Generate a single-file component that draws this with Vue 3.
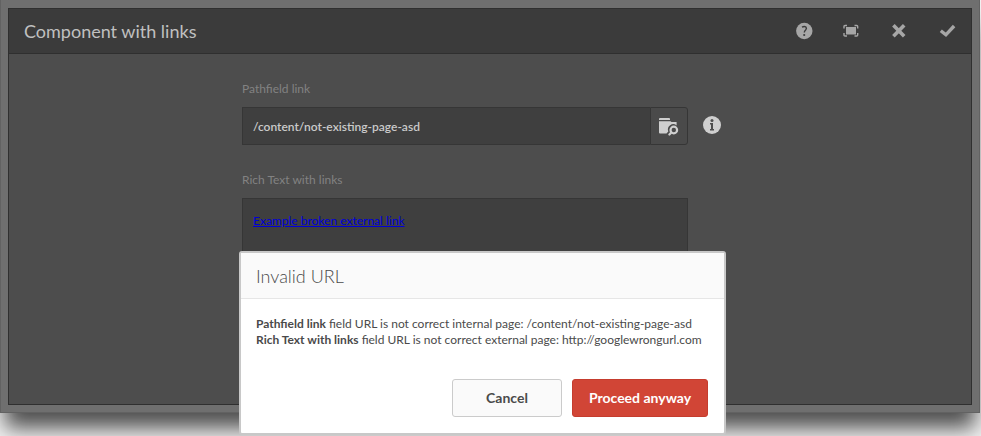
<script setup>
import { ref } from 'vue'

const path = ref('/content/not-existing-page-asd')
const problems = [
  { field: 'Pathfield link', kind: 'internal', url: '/content/not-existing-page-asd' },
  { field: 'Rich Text with links', kind: 'external', url: 'http://googlewrongurl.com' },
]
</script>

<template>
  <div class="page">
    <div class="frame">
      <section class="dialog">
        <header class="dialog-header">
          <h1>Component with links</h1>
          <div class="actions">
            <button type="button" aria-label="Help">
              <svg width="18" height="18" viewBox="0 0 18 18">
                <circle cx="9.3" cy="9" r="8.2" fill="currentColor" />
                <path d="M7 5.2Q9.2 4 10.9 5Q12.1 6.500 10.600 8Q9.300 9.100 9.300 10.600" fill="none" stroke="#3b3b3b" stroke-width="1.4" />
                <circle cx="9.2" cy="13" r="1.1" fill="#3b3b3b" />
              </svg>
            </button>
            <button type="button" aria-label="Toggle fullscreen">
              <svg width="18" height="18" viewBox="0 0 18 18">
                <rect x="3" y="5" width="10" height="7.500" fill="currentColor" />
                <path d="M1 6.500V4.500Q1 3.500 2 3.500H4M11.500 3.500H13.700Q14.700 3.500 14.700 4.500V6.500M14.700 11V13Q14.700 14 13.700 14H11.500M4 14H2Q1 14 1 13V11" fill="none" stroke="currentColor" stroke-width="1.4" />
              </svg>
            </button>
            <button type="button" aria-label="Close">
              <svg width="18" height="18" viewBox="0 0 18 18">
                <path d="M2.400 3.200L13.200 14.200M13.200 3.200L2.400 14.200" fill="none" stroke="currentColor" stroke-width="3.6" />
              </svg>
            </button>
            <button type="button" aria-label="Done">
              <svg width="18" height="18" viewBox="0 0 18 18">
                <path d="M1.800 8.700L6.900 12.800L15.100 4" fill="none" stroke="currentColor" stroke-width="3.400" />
              </svg>
            </button>
          </div>
        </header>
        <form class="form" @submit.prevent>
          <label class="label" for="path">Pathfield link</label>
          <div class="path-row">
            <div class="path-group">
              <input id="path" v-model="path" type="text" spellcheck="false" />
              <button type="button" aria-label="Browse">
                <svg width="20" height="20" viewBox="0 0 20 20">
                  <path d="M1 2H10Q11 2 11 3V4H0V3Q0 2 1 2ZM0 5.200H11.500L12.500 6H17.600V9.400A5.300 5.300 0 0 0 9.300 15.400L7.500 17.600H1Q0 17.600 0 16.600Z" fill="currentColor" />
                  <circle cx="14.800" cy="14" r="3.300" fill="none" stroke="currentColor" stroke-width="2.200" />
                  <path d="M12.300 16.400L10.400 18.500" stroke="currentColor" stroke-width="2.200" stroke-linecap="round" />
                </svg>
              </button>
            </div>
            <svg class="info" width="18" height="20" viewBox="0 0 18 20" role="img" aria-label="Information">
              <circle cx="9" cy="9" r="9" fill="currentColor" />
              <circle cx="9" cy="4.400" r="1.500" fill="#4d4d4d" />
              <path d="M7 7H10V13H11V14.500H7V13H8V8.500H7Z" fill="#4d4d4d" />
            </svg>
          </div>
          <span class="label">Rich Text with links</span>
          <div class="rich-text"><a href="#">Example broken external link</a></div>
        </form>
      </section>
    </div>

    <div class="overlay">
      <div class="modal" role="alertdialog" aria-labelledby="modal-title">
        <h2 id="modal-title">Invalid URL</h2>
        <div class="message">
          <p v-for="p in problems" :key="p.field">
            <b>{{ p.field }}</b> field URL is not correct {{ p.kind }} page: {{ p.url }}
          </p>
        </div>
        <div class="buttons">
          <button type="button" class="cancel">Cancel</button>
          <button type="button" class="proceed">Proceed anyway</button>
        </div>
      </div>
    </div>
  </div>
</template>

<style>
body {
  background: #f2f2f2;
}
</style>

<style scoped>
.page {
  position: relative;
  box-sizing: border-box;
  min-height: 100vh;
  padding-right: 1px;
  overflow: hidden;
  font-family: Lato, "Noto Sans", sans-serif;
  font-size: 12px;
  line-height: 16px;
}
.page * {
  box-sizing: border-box;
}
button,
input {
  font: inherit;
}
.frame {
  padding: 8px 7px 7px;
  border: 1px solid #626262;
  border-top: 0;
  background: #6f6f6f;
  box-shadow: 0 20px 20px -5px rgba(0, 0, 0, 0.68);
}
.dialog {
  border: 1px solid #2f2f2f;
  background: #4d4d4d;
}
.dialog-header {
  display: flex;
  align-items: center;
  justify-content: space-between;
  height: 45px;
  padding: 0 14px 0 15px;
  border-bottom: 1px solid #2f2f2f;
  background: #3b3b3b;
  color: #a6a6a6;
}
h1 {
  margin: 0;
  color: #c0c0c0;
  font-size: 18px;
  font-weight: 400;
  line-height: 24px;
}
.actions {
  display: flex;
  gap: 30px;
}
.actions button {
  display: flex;
  padding: 0;
  border: 0;
  background: none;
  color: inherit;
}
.form {
  width: 496px;
  max-width: 100%;
  height: 350px;
  margin: 0 auto;
  padding-top: 27px;
}
.label {
  display: block;
  margin-bottom: 10px;
  color: #828282;
}
.path-row {
  display: flex;
  align-items: center;
  gap: 15px;
  margin-bottom: 27px;
}
.path-group {
  display: flex;
  width: 446px;
  height: 38px;
}
.path-group input {
  flex: 1;
  min-width: 0;
  padding: 2px 10px 0;
  border: 1px solid #363636;
  border-right: 0;
  border-radius: 0;
  outline: 0;
  background: #3f3f3f;
  color: #cacaca;
  font-weight: 600;
}
.path-group button {
  display: flex;
  align-items: center;
  justify-content: center;
  width: 38px;
  padding: 0;
  border: 1px solid #363636;
  border-radius: 0 3px 3px 0;
  background: #4a4a4a;
  color: #cfcfcf;
}
.info {
  color: #cfcfcf;
}
.rich-text {
  width: 446px;
  height: 180px;
  padding: 14px 10px;
  border: 1px solid #363636;
  background: #3f3f3f;
}
.rich-text a {
  color: #0000d8;
}
.overlay {
  position: absolute;
  inset: 251px 16px auto 0;
  display: flex;
  justify-content: center;
}
.modal {
  width: 487px;
  border: 2px solid #c8c8c8;
  border-radius: 3px;
  background: #fff;
  color: #4a4a4a;
}
h2 {
  margin: 0;
  padding: 11px 15px 10px;
  border-bottom: 1px solid #e6e6e6;
  background: #fafafa;
  font-size: 18px;
  font-weight: 300;
  line-height: 24px;
}
.message {
  padding: 17px 15px 31px;
}
.message p {
  margin: 0;
}
.buttons {
  display: flex;
  justify-content: flex-end;
  gap: 10px;
  padding: 0 16px 16px;
}
.buttons button {
  height: 38px;
  padding: 0;
  border-radius: 3px;
  font-size: 14px;
  font-weight: 700;
}
.cancel {
  width: 110px;
  border: 1px solid #cbcbcb;
  background: #fafafa;
  color: #4a4a4a;
}
.proceed {
  width: 136px;
  border: 1px solid #c53c2e;
  background: #d14536;
  color: #fff;
}
</style>
